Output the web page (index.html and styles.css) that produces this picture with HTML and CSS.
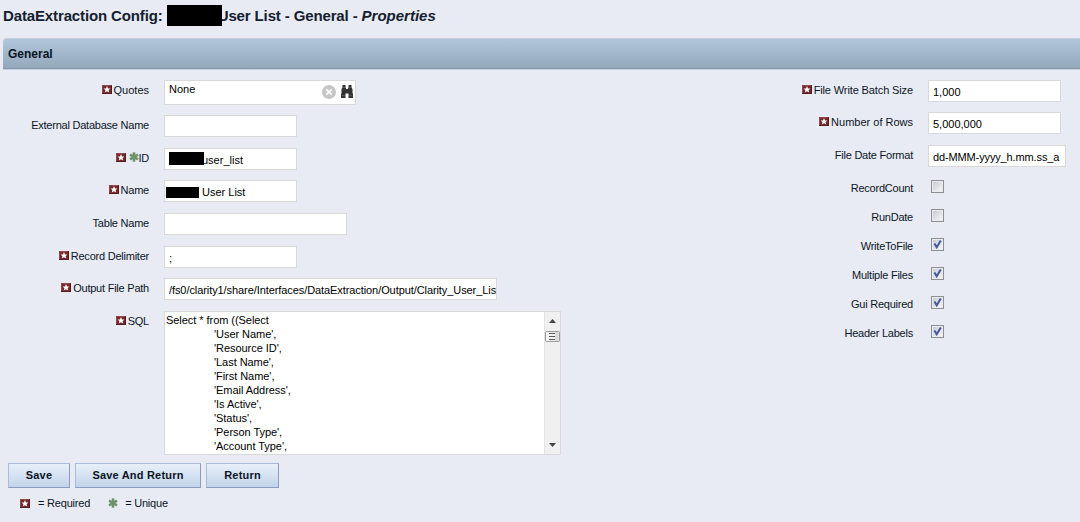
FILE: index.html
```html
<!DOCTYPE html>
<html lang="en">
<head>
  <meta charset="UTF-8" />
  <title>DataExtraction Config - Properties</title>
  <link rel="stylesheet" href="styles.css">
</head>
<body>
  <svg width="0" height="0" class="defs">
    <symbol id="required" viewBox="0 0 10 9">
      <rect width="10" height="9" fill="#74282c" />
      <path d="M.5 9V.5H10" fill="none" stroke="#94484a" stroke-width="1" />
      <path d="M0 8.5H10M9.5 0V9" stroke="#551c20" stroke-width="1" />
      <path d="M5 1L6 3.4L8.4 3.6L6.6 5.2L7.2 7.6L5 6.3L2.8 7.6L3.4 5.2L1.6 3.6L4 3.4Z" fill="#fff" />
    </symbol>
    <symbol id="unique" viewBox="0 0 10 10">
      <path d="M5 .3V9.7M1 2.6L9 7.4M9 2.6L1 7.4" stroke="#6d9468" stroke-width="2.5" />
    </symbol>
  </svg>

  <h1>DataExtraction Config: <span class="redacted"></span>User List - General - <em>Properties</em></h1>
  <h2>General</h2>

  <form>
    <div class="columns">
      <div class="left">
        <div class="row row-quotes">
          <label class="loose"><svg class="req"><use href="#required" /></svg>Quotes</label>
          <div class="lookup">
            <span>None</span>
            <svg width="14" height="14" viewBox="0 0 14 14">
              <circle cx="7" cy="7" r="7" fill="#c6c6c6" />
              <path d="M4.3 4.3L9.7 9.7M9.7 4.3L4.3 9.7" stroke="#fff" stroke-width="1.7" />
            </svg>
            <svg width="12" height="13" viewBox="0 0 12 13">
              <path d="M1.5 0H4.5V3H5V4H7V3H7.5V0H10.5V2.5L11.5 4V8L12 9V13H7.5V8.5H4.5V13H0V9L.5 8V4L1.5 2.5Z" fill="#333" />
              <path d="M.5 10.5H4M8 10.5H11.5M1.5 2.5H4.5M7.5 2.5H10.5" stroke="#666" stroke-width=".6" />
            </svg>
          </div>
        </div>
        <div class="row">
          <label>External Database Name</label>
          <input type="text" />
        </div>
        <div class="row">
          <label><svg class="req"><use href="#required" /></svg><svg class="uni"><use href="#unique" /></svg>ID</label>
          <div class="masked mask-id"><input type="text" value="user_list" /></div>
        </div>
        <div class="row">
          <label><svg class="req"><use href="#required" /></svg>Name</label>
          <div class="masked mask-name"><input type="text" value="User List" /></div>
        </div>
        <div class="row">
          <label>Table Name</label>
          <input type="text" class="medium" />
        </div>
        <div class="row">
          <label><svg class="req"><use href="#required" /></svg>Record Delimiter</label>
          <input type="text" value=";" />
        </div>
        <div class="row">
          <label><svg class="req"><use href="#required" /></svg>Output File Path</label>
          <input type="text" class="wide" value="/fs0/clarity1/share/Interfaces/DataExtraction/Output/Clarity_User_List" />
        </div>
        <div class="row">
          <label><svg class="req"><use href="#required" /></svg>SQL</label>
          <div class="sql">
<pre>Select * from ((Select
	'User Name',
	'Resource ID',
	'Last Name',
	'First Name',
	'Email Address',
	'Is Active',
	'Status',
	'Person Type',
	'Account Type',</pre>
            <div class="scrollbar">
              <svg width="7" height="4" viewBox="0 0 7 4"><path d="M0 4L3.5 0L7 4Z" fill="#444" /></svg>
              <svg class="thumb" width="15" height="11" viewBox="0 0 15 11">
                <rect x=".5" y=".5" width="14" height="10" rx="1" fill="#dcdcdc" stroke="#999" />
                <rect x="1" y="1" width="9" height="9" fill="#f4f4f4" />
                <path d="M4 2.5H10M4 5.5H10M4 8.5H10" stroke="#555" />
              </svg>
              <svg class="down" width="7" height="4" viewBox="0 0 7 4"><path d="M0 0L3.5 4L7 0Z" fill="#444" /></svg>
            </div>
          </div>
        </div>
      </div>

      <div class="right">
        <div class="row">
          <label class="batch"><svg class="req"><use href="#required" /></svg>File Write Batch Size</label>
          <input type="text" value="1,000" />
        </div>
        <div class="row">
          <label class="loose"><svg class="req"><use href="#required" /></svg>Number of Rows</label>
          <input type="text" value="5,000,000" />
        </div>
        <div class="row row-date">
          <label>File Date Format</label>
          <input type="text" class="date" value="dd-MMM-yyyy_h.mm.ss_a" />
        </div>
        <div class="check"><label>RecordCount</label><span class="box"></span></div>
        <div class="check"><label>RunDate</label><span class="box"></span></div>
        <div class="check"><label>WriteToFile</label><span class="box"><svg viewBox="0 0 9 9"><path d="M1.5 3.5L3.7 7.3L7.8 .6" /></svg></span></div>
        <div class="check"><label>Multiple Files</label><span class="box"><svg viewBox="0 0 9 9"><path d="M1.5 3.5L3.7 7.3L7.8 .6" /></svg></span></div>
        <div class="check"><label>Gui Required</label><span class="box"><svg viewBox="0 0 9 9"><path d="M1.5 3.5L3.7 7.3L7.8 .6" /></svg></span></div>
        <div class="check"><label>Header Labels</label><span class="box"><svg viewBox="0 0 9 9"><path d="M1.5 3.5L3.7 7.3L7.8 .6" /></svg></span></div>
      </div>
    </div>

    <div class="buttons">
      <button type="button" class="save">Save</button>
      <button type="button" class="save-return">Save And Return</button>
      <button type="button" class="return">Return</button>
    </div>
  </form>

  <div class="legend">
    <svg class="req"><use href="#required" /></svg><span class="legend-req">= Required</span>
    <svg class="uni"><use href="#unique" /></svg><span>= Unique</span>
  </div>
</body>
</html>
```
FILE: styles.css
```css
* {
  box-sizing: border-box;
}

body {
  margin: 0;
  height: 522px;
  overflow: hidden;
  background: #e8ebf3;
  color: #0b1526;
  font-family: "Liberation Sans", Arial, sans-serif;
  font-size: 11px;
}

.defs {
  display: block;
}

h1 {
  display: flex;
  align-items: center;
  height: 38px;
  margin: 0;
  padding: 0 0 7px 3px;
  font-size: 15px;
  letter-spacing: -0.13px;
  white-space: pre;
  color: #14202f;
}

.redacted {
  width: 55px;
  height: 21px;
  margin-right: -4px;
  background: #000;
  position: relative;
}

h2 {
  height: 31px;
  margin: 0 0 0 3px;
  padding-left: 5px;
  border-top: 1px solid #c3ced9;
  border-bottom: 1px solid #8598ab;
  border-radius: 4px 0 0 0;
  background: linear-gradient(#b1c6da, #93a8bb);
  box-shadow: 0 1px 0 #c9d1dc;
  font-size: 12px;
  line-height: 30px;
}

h1 em {
  letter-spacing: 0;
}

.columns {
  display: flex;
  height: 394px;
  padding-top: 11px;
}

.left {
  width: 764px;
}

.row {
  display: flex;
  align-items: flex-start;
  height: 32.67px;
}

.row-quotes {
  height: 35px;
}

label {
  width: 149px;
  margin-right: 15px;
  letter-spacing: -0.23px;
  line-height: 20px;
  text-align: right;
  white-space: nowrap;
}

.loose {
  letter-spacing: 0;
}

.batch {
  letter-spacing: -0.12px;
}

.req {
  width: 10px;
  height: 9px;
  margin-right: 2px;
}

.uni {
  width: 10px;
  height: 10px;
  margin: 0 -1px 0 1px;
}

input {
  width: 133px;
  height: 22px;
  padding: 2px 0 0 4px;
  border: 1px solid #d9d9d9;
  background: #fff;
  color: #000;
  font: inherit;
}

.medium {
  width: 183px;
}

.wide {
  width: 333px;
  letter-spacing: -0.08px;
}

.date {
  width: 138px;
  letter-spacing: -0.13px;
}

.lookup {
  display: flex;
  width: 192px;
  height: 25px;
  padding: 4px 2px 0 4px;
  border: 1px solid #d9d9d9;
  background: #fff;
  color: #000;
  gap: 5px;
}

.lookup span {
  flex: 1;
  line-height: 8px;
}

.masked {
  position: relative;
}

.masked::before {
  content: "";
  position: absolute;
  background: #000;
}

.mask-id::before {
  left: 5px;
  top: 4px;
  width: 35px;
  height: 13px;
}

.mask-id input {
  padding-left: 37px;
}

.mask-name::before {
  left: 2px;
  top: 7px;
  width: 33px;
  height: 11px;
}

.mask-name input {
  padding-left: 37px;
}

.sql {
  display: flex;
  width: 397px;
  height: 144px;
  border: 1px solid #d9d9d9;
  background: #fff;
  color: #000;
}

pre {
  flex: 1;
  margin: 0;
  padding: 1px 0 0 1px;
  font: inherit;
  letter-spacing: -0.05px;
  line-height: 14px;
  tab-size: 48px;
}

.scrollbar {
  display: flex;
  flex-direction: column;
  align-items: center;
  width: 16px;
  padding: 7px 0 7px;
  border-left: 1px solid #e3e3e3;
  background: #f0f0f0;
}

.thumb {
  margin-top: 8px;
}

.down {
  margin-top: auto;
}

.right .row {
  height: 32.4px;
}

.right .row-date {
  height: 35.2px;
}

.check {
  display: flex;
  height: 29px;
}

.check label {
  margin-right: 18px;
  line-height: 16px;
}

.box {
  width: 13px;
  height: 13px;
  padding: 1px;
  border: 1px solid #8e8f8f;
  background: linear-gradient(135deg, #c9ccd3, #f4f4f6) content-box #f4f4f4;
}

.box svg {
  display: block;
  width: 9px;
  height: 9px;
}

.box path {
  fill: none;
  stroke: #46599c;
  stroke-width: 2;
}

.buttons {
  display: flex;
  gap: 5px;
  padding-left: 8px;
}

button {
  height: 25px;
  padding: 0 0 1px;
  border: 1px solid #8a9cbf;
  border-top-color: #a9bdd8;
  border-left-color: #a9bdd8;
  background: linear-gradient(#e7f0f9, #c2d4ea);
  color: #0b1526;
  font: bold 11px "Liberation Sans", Arial, sans-serif;
  letter-spacing: 0.2px;
}

.save {
  width: 62px;
}

.save-return {
  width: 126px;
}

.return {
  width: 73px;
}

.legend {
  display: flex;
  align-items: center;
  height: 30px;
  padding-left: 20px;
  letter-spacing: -0.2px;
}

.legend .req {
  margin-right: 8px;
}

.legend .uni {
  margin: 0 7px 0 0;
}

.legend-req {
  margin-right: 18px;
}
```
